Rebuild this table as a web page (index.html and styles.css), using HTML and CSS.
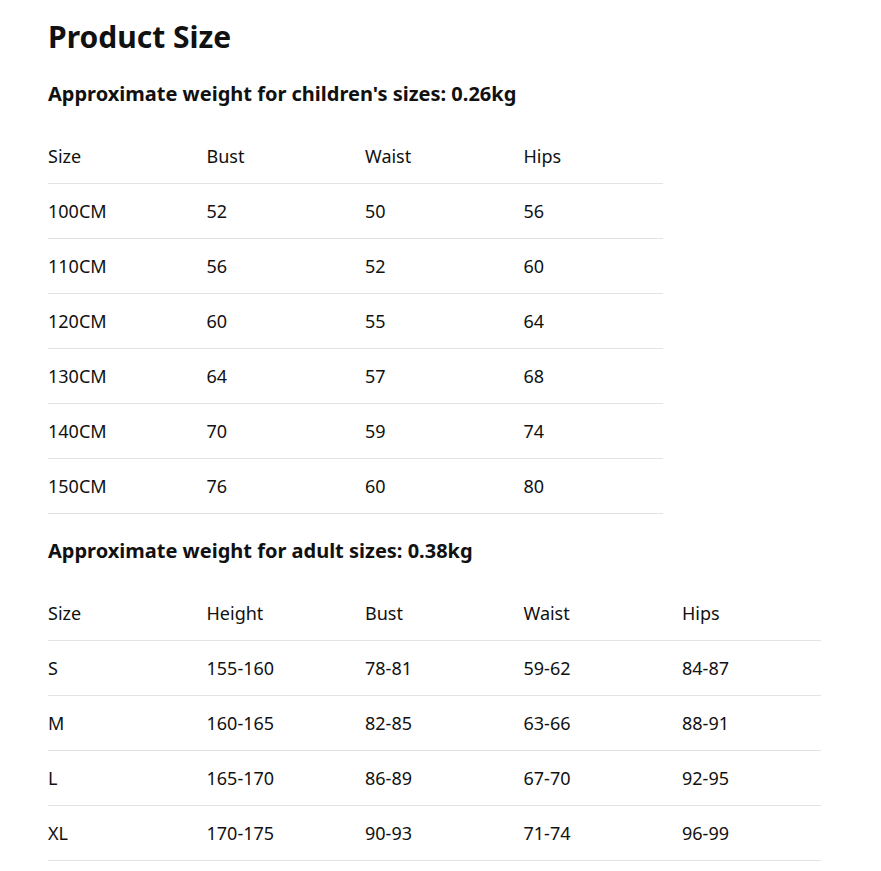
FILE: index.html
```html
<!DOCTYPE html>
<html>
<head>
<meta charset="utf-8">
<link rel="stylesheet" href="styles.css">
</head>
<body>
<div class="page">
  <h1 class="title">Product Size</h1>
  <h2 class="subtitle">Approximate weight for children's sizes: 0.26kg</h2>
  <table class="size-table">
    <thead>
      <tr><th>Size</th><th>Bust</th><th>Waist</th><th>Hips</th></tr>
    </thead>
    <tbody>
      <tr><td>100CM</td><td>52</td><td>50</td><td>56</td></tr>
      <tr><td>110CM</td><td>56</td><td>52</td><td>60</td></tr>
      <tr><td>120CM</td><td>60</td><td>55</td><td>64</td></tr>
      <tr><td>130CM</td><td>64</td><td>57</td><td>68</td></tr>
      <tr><td>140CM</td><td>70</td><td>59</td><td>74</td></tr>
      <tr><td>150CM</td><td>76</td><td>60</td><td>80</td></tr>
    </tbody>
  </table>
  <h2 class="subtitle">Approximate weight for adult sizes: 0.38kg</h2>
  <table class="size-table">
    <thead>
      <tr><th>Size</th><th>Height</th><th>Bust</th><th>Waist</th><th>Hips</th></tr>
    </thead>
    <tbody>
      <tr><td>S</td><td>155-160</td><td>78-81</td><td>59-62</td><td>84-87</td></tr>
      <tr><td>M</td><td>160-165</td><td>82-85</td><td>63-66</td><td>88-91</td></tr>
      <tr><td>L</td><td>165-170</td><td>86-89</td><td>67-70</td><td>92-95</td></tr>
      <tr><td>XL</td><td>170-175</td><td>90-93</td><td>71-74</td><td>96-99</td></tr>
    </tbody>
  </table>
</div>
</body>
</html>
```
FILE: styles.css
```css
html, body {
  margin: 0;
  padding: 0;
  background: #ffffff;
}
body {
  font-family: "Noto Sans", "Open Sans", sans-serif;
  color: #111111;
}
.page {
  padding: 17px 48px 0 48px;
}
.title {
  font-size: 30px;
  font-weight: 700;
  line-height: 40px;
  margin: 0;
}
.subtitle {
  font-size: 20px;
  font-weight: 700;
  line-height: 24px;
  margin: 25px 0 23px 0;
}
.size-table {
  border-collapse: collapse;
  margin: 0;
}
.size-table th,
.size-table td {
  width: 139px;
  padding: 0 19.5px 0 0;
  height: 54px;
  text-align: left;
  font-weight: 400;
  font-size: 18px;
  border-bottom: 1px solid #e3e3e3;
  vertical-align: middle;
}
.size-table th:last-child,
.size-table td:last-child {
  padding-right: 0;
}
```
